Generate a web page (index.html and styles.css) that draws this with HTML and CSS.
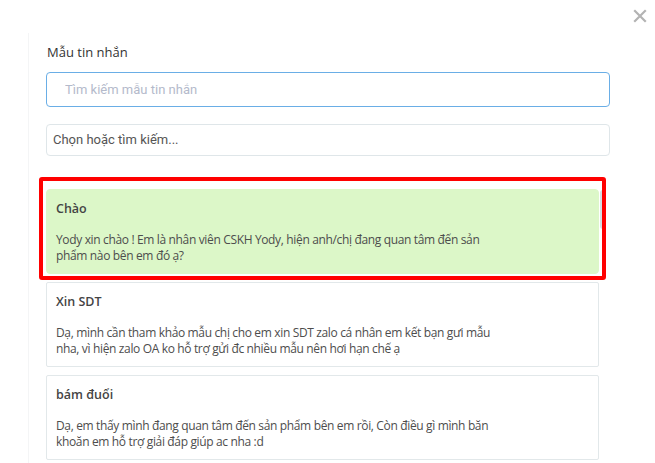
FILE: index.html
```html
<!DOCTYPE html>
<html lang="vi">
<head>
<meta charset="utf-8">
<link rel="stylesheet" href="styles.css">
</head>
<body>
<button class="close" aria-label="Đóng">
  <svg width="14" height="14" viewBox="0 0 14 14"><path d="M2 2 L12 12 M12 2 L2 12" stroke="#b3b3b3" stroke-width="2.2" stroke-linecap="square"/></svg>
</button>
<div class="panel">
  <div class="label">Mẫu tin nhắn</div>
  <input class="search" type="text" placeholder="Tìm kiếm mẫu tin nhắn">
  <div class="select">Chọn hoặc tìm kiếm...</div>
  <div class="list">
    <div class="cards">
      <div class="card active">
        <div class="card-title">Chào</div>
        <div class="card-body">Yody xin chào ! Em là nhân viên CSKH Yody, hiện anh/chị đang quan tâm đến sản phẩm nào bên em đó ạ?</div>
      </div>
      <div class="card">
        <div class="card-title">Xin SDT</div>
        <div class="card-body">Dạ, mình cần tham khảo mẫu chị cho em xin SDT zalo cá nhân em kết bạn gưi mẫu nha, vì hiện zalo OA ko hỗ trợ gửi đc nhiều mẫu nên hơi hạn chế ạ</div>
      </div>
      <div class="card">
        <div class="card-title">bám đuổi</div>
        <div class="card-body">Dạ, em thấy mình đang quan tâm đến sản phẩm bên em rồi, Còn điều gì mình băn khoăn em hỗ trợ giải đáp giúp ac nha :d</div>
      </div>
    </div>
    <div class="track"><div class="thumb"></div></div>
    <div class="highlight"></div>
  </div>
</div>
</body>
</html>
```
FILE: styles.css
```css
html, body {
  margin: 0;
  padding: 0;
  background: #ffffff;
  overflow: hidden;
  height: 463px;
}
body {
  font-family: "Open Sans", "Liberation Sans", sans-serif;
  color: #333;
  position: relative;
}
.close {
  position: absolute;
  top: 9px;
  left: 633px;
  width: 14px;
  height: 14px;
  padding: 0;
  border: 0;
  background: transparent;
  display: block;
}
.close svg { display: block; }
.panel {
  margin: 33px 0 0 28px;
  width: 598px;
  border-left: 1px solid #f4f5f6;
  border-right: 1px solid #f4f5f6;
  padding: 11px 17px 0 17px;
  height: 460px;
}
.label {
  font-size: 13px;
  line-height: 16px;
  color: #333;
  margin-bottom: 12px;
  padding-left: 1px;
}
.search {
  display: block;
  box-sizing: border-box;
  width: 564px;
  height: 35px;
  border: 1px solid #6aaee6;
  border-radius: 4px;
  padding: 0 18px;
  font-family: Roboto, "Liberation Sans", sans-serif;
  font-size: 13px;
  color: #333;
  outline: none;
  margin: 0 0 17px 0;
}
.search::placeholder { color: #b4bacb; }
.select {
  box-sizing: border-box;
  width: 564px;
  height: 32px;
  border: 1px solid #dfe6e9;
  border-radius: 4px;
  padding: 0 6px;
  font-family: Roboto, "Liberation Sans", sans-serif;
  font-size: 13px;
  line-height: 30px;
  color: #555;
}
.list {
  position: relative;
  margin-top: 33px;
  display: flex;
  width: 562px;
}
.cards {
  width: 553px;
  display: flex;
  flex-direction: column;
  gap: 8px;
}
.card {
  border: 1px solid #e2e8ea;
  border-radius: 2px;
  padding: 11px 9px 9px 9px;
}
.card.active {
  background: #dcf7c8;
  border-color: #dcf7c8;
  border-radius: 4px;
}
.card-title {
  font-size: 12.5px;
  line-height: 16px;
  font-weight: 600;
  color: #444;
  margin-bottom: 15px;
}
.card-body {
  font-size: 12px;
  letter-spacing: -0.35px;
  line-height: 16px;
  color: #4d4d4d;
  max-width: 452px;
}
.track {
  width: 8px;
  margin-left: 1px;
}
.thumb {
  margin-top: 1px;
  width: 6px;
  height: 39px;
  background: #d6dee3;
  border-radius: 3px;
}
.highlight {
  position: absolute;
  left: -7px;
  top: -12px;
  width: 567px;
  height: 103px;
  box-sizing: border-box;
  border: 4px solid #ff0000;
  border-radius: 3px;
  pointer-events: none;
}
```
